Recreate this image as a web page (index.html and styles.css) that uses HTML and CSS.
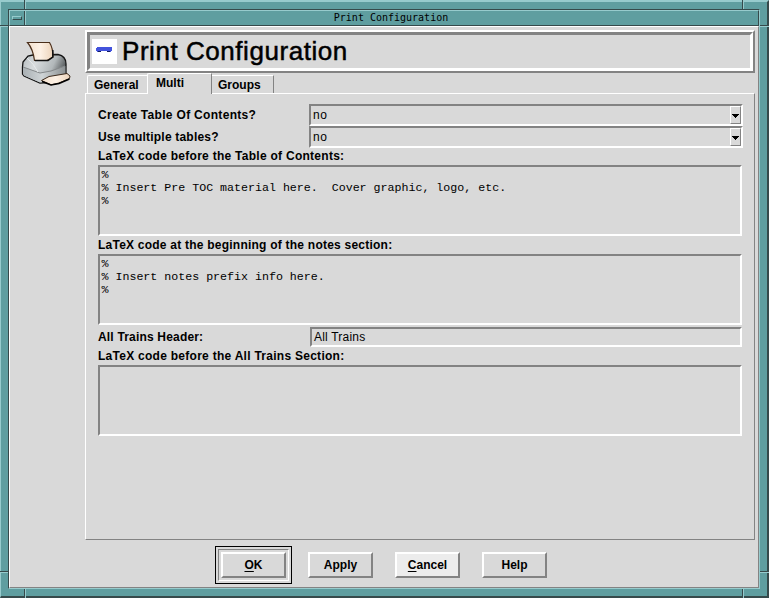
FILE: index.html
```html
<!DOCTYPE html>
<html lang="en">
<head>
<meta charset="utf-8">
<title>Print Configuration</title>
<link rel="stylesheet" href="styles.css">
</head>
<body>
<div class="window">
  <i class="notch v tl"></i><i class="notch v tr"></i><i class="notch v bl"></i><i class="notch v br"></i>
  <i class="notch h lt"></i><i class="notch h rt"></i><i class="notch h lb"></i><i class="notch h rb"></i>
  <div class="inner">
    <div class="titlebar"><span class="sysmenu"><b></b></span><span class="caption">Print Configuration</span></div>
    <div class="client">
      <div class="side">
        <svg class="printer" width="51" height="48" viewBox="0 0 51 48">
          <defs>
            <linearGradient id="metal" x1="0" y1="0" x2="1" y2=".3"><stop offset="0" stop-color="#b4babd"/><stop offset=".35" stop-color="#d8dcde"/><stop offset=".75" stop-color="#b2b8ba"/><stop offset="1" stop-color="#5c6062"/></linearGradient>
            <linearGradient id="front" x1="0" y1="0" x2="1" y2="0"><stop offset="0" stop-color="#a9b0b4"/><stop offset=".45" stop-color="#cfd4d6"/><stop offset="1" stop-color="#8b9092"/></linearGradient>
            <linearGradient id="paper" x1="0" y1="0" x2="1" y2="0"><stop offset="0" stop-color="#f3e0cd"/><stop offset=".5" stop-color="#fdf1e5"/><stop offset="1" stop-color="#ecd3ba"/></linearGradient>
          </defs>
          <path d="M1.5 27 L2 22 L7 16 L12 15 L37 14.5 Q45 16 45 24 L45 36 L36 42 L19 43 L3 36 L1.5 34Z" fill="url(#metal)" stroke="#151515" stroke-width="1.3"/>
          <path d="M2 27 L19 33 L30 31 L44.4 26 L44.4 35 L36 41.4 L19 42.4 L3 35.5 L2 34Z" fill="url(#front)"/>
          <path d="M2 27 L19 33 L30 31 L44 26" fill="none" stroke="#85898b" stroke-width="1"/>
          <path d="M6 18 Q13 24 17 32" fill="none" stroke="#e8ebec" stroke-width="1"/>
          <path d="M6.5 2.5 L28.5 2.5 Q32 8 32 17 L26 20.5 L13.5 20.5 Q12 9 6.5 2.5Z" fill="url(#paper)" stroke="#4a2e1a" stroke-width="1.2"/>
          <path d="M31.8 10V17L27 20.5H14" fill="none" stroke="#111" stroke-width="1.5"/>
          <path d="M20.5 40.5 L28 36.5 L46 33.5 L49 36 L48.5 38.5 L38 43 L30 44.8Z" fill="url(#paper)" stroke="#3a281a" stroke-width="1"/>
          <path d="M21 41.5 L30 45 L38 43.5 L48.5 39" fill="none" stroke="#000" stroke-width="1.5"/>
        </svg>
      </div>
      <div class="main">
        <div class="header"><span class="logo"><svg width="25" height="25" viewBox="0 0 25 25"><path d="M4 9h1V8h15v4h-1v1h-4v-1H9v1H5v-1H4z" fill="#4353dc"/><path d="M6 12h3v1H6zM15 12h3v1h-3z" fill="#111b60"/></svg></span><h1>Print Configuration</h1></div>
        <div class="tabs">
          <div class="tab general">General</div>
          <div class="tab multi">Multi</div>
          <div class="tab groups">Groups</div>
        </div>
        <div class="page">
          <div class="row"><label class="l1">Create Table Of Contents?</label><div class="combo"><span>no</span><i class="arrow"><svg width="7" height="4" shape-rendering="crispEdges"><path d="M0 0h7v1h-1v1h-1v1h-1v1h-1v-1h-1v-1h-1v-1h-1z"/></svg></i></div></div>
          <div class="row"><label class="l2">Use multiple tables?</label><div class="combo"><span>no</span><i class="arrow"><svg width="7" height="4" shape-rendering="crispEdges"><path d="M0 0h7v1h-1v1h-1v1h-1v1h-1v-1h-1v-1h-1v-1h-1z"/></svg></i></div></div>
          <label class="line l3">LaTeX code before the Table of Contents:</label>
          <pre class="text toc">%
% Insert Pre TOC material here.  Cover graphic, logo, etc.
%</pre>
          <label class="line l4">LaTeX code at the beginning of the notes section:</label>
          <pre class="text">%
% Insert notes prefix info here.
%</pre>
          <div class="row entryrow"><label class="l5">All Trains Header:</label><div class="entry">All Trains</div></div>
          <label class="line l6">LaTeX code before the All Trains Section:</label>
          <pre class="text"></pre>
        </div>
      </div>
      <div class="buttons">
        <div class="default"><div class="ring"><button class="btn"><u>O</u>K</button></div></div>
        <button class="btn">Apply</button>
        <button class="btn active"><u>C</u>ancel</button>
        <button class="btn">Help</button>
      </div>
    </div>
  </div>
</div>
</body>
</html>
```

FILE: styles.css
```css
* { box-sizing: border-box; }
body { margin: 0; background: #5f9ea0; font: bold 12px/15px "Liberation Sans", Arial, sans-serif; color: #000; overflow: hidden; }
.window { position: relative; width: 769px; height: 598px; padding: 7px; background: #5f9ea0; border-style: solid; border-width: 2px 2px 2px 1px; border-color: #97cbcd #364a4b #364a4b #97cbcd; }
.inner { width: 752px; height: 580px; border: 1px solid; border-color: #364a4b #97cbcd #97cbcd #364a4b; }

/* resize-handle grooves in the window frame */
.notch { position: absolute; }
.notch.v { width: 2px; height: 9px; border-left: 1px solid #364a4b; border-right: 1px solid #97cbcd; }
.notch.h { width: 8px; height: 2px; border-top: 1px solid #364a4b; border-bottom: 1px solid #97cbcd; }
.tl, .tr { top: -2px; }
.bl, .br { bottom: -2px; }
.tl, .bl { left: 23px; }
.tr, .br { left: 741px; }
.lt, .lb { left: -1px; }
.rt, .rb { right: -2px; }
.notch.rt, .notch.rb { width: 9px; }
.lt, .rt { top: 23px; }
.lb, .rb { top: 569px; }

.titlebar { height: 16px; display: flex; border: 1px solid; border-color: #97cbcd #364a4b #364a4b #97cbcd; }
.sysmenu { width: 16px; height: 14px; border-right: 1px solid #97cbcd; box-shadow: inset -1px 0 #364a4b; display: flex; padding: 5px 0 0 2px; }
.sysmenu b { width: 10px; height: 4px; border: 1px solid; border-color: #97cbcd #364a4b #364a4b #97cbcd; }
.caption { flex: 1; text-align: center; font: 10px/14px "DejaVu Sans Mono", monospace; padding-right: 2px; }
.client { width: 750px; height: 562px; background: #d9d9d9; border: 1px solid; border-color: #fff #838383 #838383 #fff; display: grid; grid-template-columns: 75px 670px; grid-template-rows: 513px 1fr; }
.side { padding: 13px 0 0 11px; }
.main { padding-top: 3px; }
.header { height: 43px; display: flex; border: 2px solid; border-color: #fff #838383 #838383 #fff; position: relative; padding: 7px 5px; }
.header::after { content: ""; position: absolute; inset: 0; border: 3px solid; border-color: #838383 #fff #fff #838383; }
.logo { width: 25px; height: 25px; background: #fff; }
.logo svg, .printer, .arrow svg { display: block; }
h1 { margin: -1px 0 0 5px; font: 26px/26px "Liberation Sans", Arial, sans-serif; letter-spacing: .55px; -webkit-text-stroke: .5px #000; white-space: nowrap; }
.tabs { height: 20px; display: flex; align-items: flex-end; padding-left: 2px; }
.tab { border: 1px solid; border-color: #fff #838383 transparent #fff; border-bottom: 0; height: 18px; }
.general { width: 60px; padding: 2px 0 0 6px; border-right: 0; border-top-left-radius: 2px; }
.multi { width: 65px; height: 21px; padding: 2px 0 0 8px; background: #d9d9d9; position: relative; margin-bottom: -1px; border-top-left-radius: 2px; }
.groups { width: 62px; padding: 2px 0 0 6px; border-left: 0; }
.page { height: 447px; border: 1px solid; border-color: #fff #838383 #838383 #fff; padding: 10px 11px 0 12px; }
.row { height: 22px; display: flex; }
.row label { width: 211px; line-height: 22px; white-space: nowrap; }
.l1 { letter-spacing: .31px; }
.l2 { letter-spacing: .2px; }
.l3, .l6 { letter-spacing: .27px; }
.l4 { letter-spacing: .23px; }
.l5 { letter-spacing: .18px; }
.combo { width: 434px; height: 22px; border: 2px solid; border-color: #838383 #fff #fff #838383; display: flex; justify-content: space-between; font-weight: normal; line-height: 19px; padding-left: 2px; letter-spacing: .5px; }
.arrow { width: 11px; height: 18px; border: 1px solid; border-color: #fff #838383 #838383 #fff; padding: 7px 0 0 1px; }
.line { display: block; height: 17px; line-height: 16px; white-space: nowrap; }
.text { margin: 0 0 2px; width: 644px; height: 71px; border: 2px solid; border-color: #838383 #fff #fff #838383; padding: 1px 0 0 1.5px; font: 11.64px/13px "Liberation Mono", monospace; }
.toc { margin-bottom: 1px; }
.entryrow { height: 20px; margin-bottom: 1px; }
.entryrow label { width: 212px; line-height: 20px; }
.entry { width: 432px; height: 20px; border: 2px solid; border-color: #838383 #fff #fff #838383; font-weight: normal; line-height: 17px; padding-left: 2px; letter-spacing: .2px; }
.buttons { grid-column: 1 / 3; display: flex; gap: 22px; padding: 6px 0 0 205px; align-items: flex-start; }
.default { width: 77px; height: 38px; border: 1px solid #000; padding: 2px; margin-right: -6px; }
.ring { width: 71px; height: 32px; border: 1px solid; border-color: #838383 #fff #fff #838383; padding: 2px; }
.btn { display: block; width: 65px; height: 26px; padding: 0; margin: 0; background: #d9d9d9; border: 2px solid; border-color: #fff #838383 #838383 #fff; font: inherit; color: #000; }
.buttons > .btn { margin-top: 6px; }
.active { background: #ececec; }
u { text-underline-offset: 2px; text-decoration-thickness: 1px; }
```
